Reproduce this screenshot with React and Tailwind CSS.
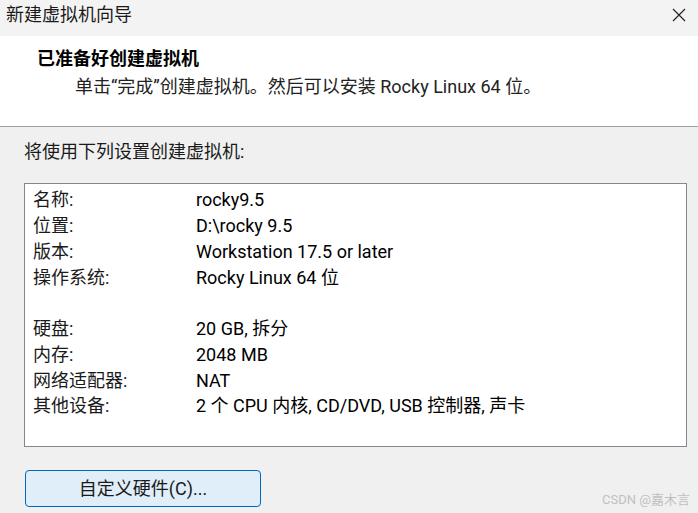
import React from 'react';

const rows = [
  ['名称:', 'rocky9.5'],
  ['位置:', 'D:\\rocky 9.5'],
  ['版本:', 'Workstation 17.5 or later'],
  ['操作系统:', 'Rocky Linux 64 位'],
  null,
  ['硬盘:', '20 GB, 拆分'],
  ['内存:', '2048 MB'],
  ['网络适配器:', 'NAT'],
  ['其他设备:', '2 个 CPU 内核, CD/DVD, USB 控制器, 声卡'],
];

export default function App() {
  return (
    <div
      className="relative w-[698px] h-[513px] overflow-hidden bg-[#f0f0f0] text-[18px] text-[#1a1a1a]"
      style={{ fontFamily: 'Roboto, "Noto Sans CJK SC", sans-serif' }}
    >
      {/* title bar */}
      <div className="flex h-[36px] items-center justify-between bg-[#f3f3f3] pl-[6px] pr-[12px] pb-[6px]">
        <span className="leading-none">新建虚拟机向导</span>
        <svg width="14" height="14" viewBox="0 0 14 14">
          <path d="M1 1L13 13M13 1L1 13" stroke="#222" strokeWidth="1.2" fill="none" />
        </svg>
      </div>

      {/* header */}
      <div className="h-[91px] border-b border-[#a0a0a0] bg-white pt-[10px]">
        <div className="pl-[37px] font-bold leading-[26px] text-black">已准备好创建虚拟机</div>
        <div className="pl-[75px] mt-[2px] leading-[26px] text-[#222]">
          单击“完成”创建虚拟机。然后可以安装 Rocky Linux 64 位。
        </div>
      </div>

      {/* body */}
      <div className="pt-[12px]">
        <div className="pl-[24px] leading-[26px]">将使用下列设置创建虚拟机:</div>
        <div className="ml-[24px] mt-[18px] h-[264px] w-[663px] border border-[#828790] bg-white pt-[3px] pl-[8px]">
          {rows.map((r, i) =>
            r ? (
              <div key={i} className="flex h-[25.75px] items-center">
                <span className="w-[163px] shrink-0">{r[0]}</span>
                <span className="text-black">{r[1]}</span>
              </div>
            ) : (
              <div key={i} className="h-[25.75px]" />
            )
          )}
        </div>
        <button className="ml-[25px] mt-[23px] flex h-[37px] w-[236px] items-center justify-center rounded-[4px] border border-[#0067c0] bg-[#e0eef9] text-[#1a1a1a]">
          自定义硬件(C)...
        </button>
      </div>

      <div className="absolute right-[8px] bottom-[7px] text-[13px] leading-none text-[#c0c0c0]">
        CSDN @嘉木言
      </div>
    </div>
  );
}
